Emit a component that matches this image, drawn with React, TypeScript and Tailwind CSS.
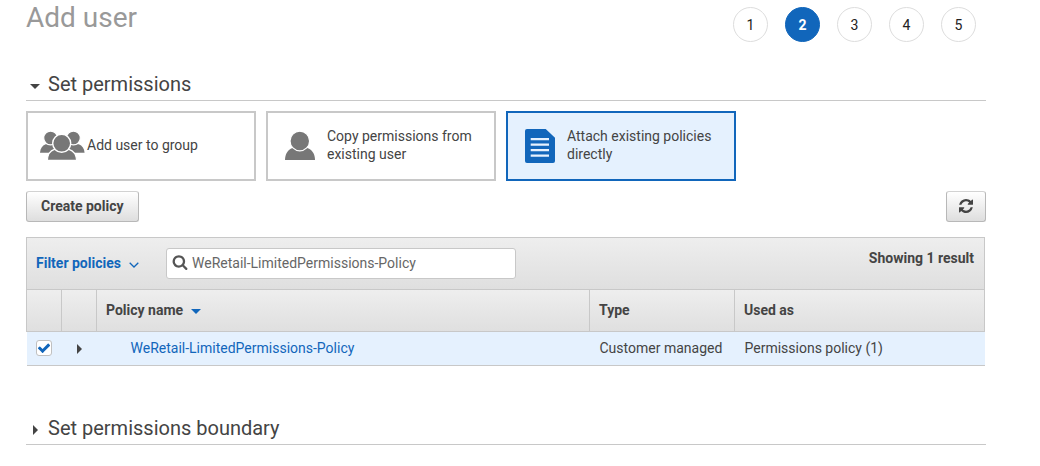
import React, { useState } from 'react';
import clsx from 'clsx';

interface Policy {
  name: string;
  type: string;
  usedAs: string;
}

const steps = [1, 2, 3, 4, 5];

const policies: Policy[] = [
  {
    name: 'WeRetail-LimitedPermissions-Policy',
    type: 'Customer managed',
    usedAs: 'Permissions policy (1)',
  },
];

const GroupIcon = () => (
  <svg viewBox="0 0 49 34" className="h-[34px] w-[49px] shrink-0" fill="#777" aria-hidden="true">
    <path d="M2 23.7C2.3 19.5 4.2 16.6 7.6 15.2H18V23.7Z" />
    <path d="M46.6 23.7C46.3 19.5 44.2 16.6 40.8 15.2H30V23.7Z" />
    <circle cx="12.6" cy="9" r="6.9" stroke="#fff" strokeWidth="1.2" />
    <circle cx="35.4" cy="9" r="6.9" stroke="#fff" strokeWidth="1.2" />
    <path
      d="M9.4 31.3C9.6 25.5 12 21.8 16.4 20.4H31C35.6 21.8 38.2 25.5 38.6 31.3Z"
      stroke="#fff"
      strokeWidth="1.2"
    />
    <circle cx="23.7" cy="14.3" r="9" stroke="#fff" strokeWidth="1.4" />
  </svg>
);

const UserIcon = () => (
  <svg viewBox="0 0 49 34" className="h-[34px] w-[49px] shrink-0" fill="#777" aria-hidden="true">
    <path d="M7 31C7 25 9.8 20.6 14.4 18.9H29.4C34.2 20.6 37 25 37 31Z" />
    <circle cx="21.8" cy="12" r="9.8" stroke="#fff" strokeWidth="1.2" />
  </svg>
);

const DocumentIcon = () => (
  <svg viewBox="0 0 49 34" className="h-[34px] w-[49px] shrink-0" aria-hidden="true">
    <path d="M9 0H27.7L37 8.7V32a2 2 0 0 1-2 2H9a2 2 0 0 1-2-2V2a2 2 0 0 1 2-2Z" fill="#1166bb" />
    <path d="M12.7 10.2H31M12.7 15.6H31M12.7 21.1H31M12.7 26.6H31" stroke="#e5f1fe" strokeWidth="2.3" />
  </svg>
);

const SearchIcon = () => (
  <svg viewBox="0 0 1792 1792" className="mb-1 h-4 w-4" fill="#555" aria-hidden="true">
    <path d="M1216 832q0-185-131.5-316.5t-316.5-131.5-316.5 131.5-131.5 316.5 131.5 316.5 316.5 131.5 316.5-131.5 131.5-316.5zm512 832q0 52-38 90t-90 38q-54 0-90-38l-343-342q-179 124-399 124-143 0-273.5-55.5t-225-150-150-225-55.5-273.5 55.5-273.5 150-225 225-150 273.5-55.5 273.5 55.5 225 150 150 225 55.5 273.5q0 220-124 399l343 343q37 37 37 90z" />
  </svg>
);

const RefreshIcon = () => (
  <svg viewBox="0 0 1536 1536" className="h-[14px] w-[14px]" fill="#444" aria-hidden="true">
    <path d="M1511 928q0 5-1 7-64 268-268 434.5t-478 166.5q-146 0-282.5-55t-243.5-157l-129 129q-19 19-45 19t-45-19-19-45v-448q0-26 19-45t45-19h448q26 0 45 19t19 45-19 45l-137 137q71 66 161 102t187 36q134 0 250-65t186-179q11-17 53-117 8-23 30-23h192q13 0 22.5 9.5t9.5 22.5zm25-800v448q0 26-19 45t-45 19h-448q-26 0-45-19t-19-45 19-45l138-138q-148-137-349-137-134 0-250 65t-186 179q-11 17-53 117-8 23-30 23h-199q-13 0-22.5-9.5t-9.5-22.5v-7q65-268 270-434.5t480-166.5q146 0 284 55.5t245 156.5l130-129q19-19 45-19t45 19 19 45z" />
  </svg>
);

const CaretDown = ({ className }: { className?: string }) => (
  <svg viewBox="0 0 10 5" className={clsx('h-[5px] w-[10px] shrink-0', className)} fill="currentColor" aria-hidden="true">
    <path d="M0 0H10L5 5Z" />
  </svg>
);

const CaretRight = () => (
  <svg viewBox="0 0 5 10" className="h-[10px] w-[5px] shrink-0" fill="currentColor" aria-hidden="true">
    <path d="M0 0V10L5 5Z" />
  </svg>
);

const options = [
  { id: 'group', label: 'Add user to group', icon: <GroupIcon /> },
  { id: 'copy', label: 'Copy permissions from existing user', icon: <UserIcon /> },
  { id: 'attach', label: 'Attach existing policies directly', icon: <DocumentIcon /> },
];

const SectionHeading = ({ title, open }: { title: string; open: boolean }) => (
  <h2 className="border-b border-[#c8c8c8]">
    <button type="button" aria-expanded={open} className="flex h-8 w-full items-center text-left text-xl text-[#444]">
      <span className="flex w-[22px] justify-center pt-1 pr-1">{open ? <CaretDown /> : <CaretRight />}</span>
      {title}
    </button>
  </h2>
);

const buttonStyle =
  'flex h-[31px] items-center justify-center rounded-[3px] border border-[#b8b8b8] border-t-[#d2d2d2] bg-linear-to-b from-white to-[#dedede] pb-[2px] font-bold text-[#444]';

const headCell = 'border border-[#c8c8c8] px-[9px] pb-[2px] text-left font-bold';

const App: React.FC = () => {
  const [selected, setSelected] = useState('attach');
  const [query, setQuery] = useState('WeRetail-LimitedPermissions-Policy');
  const [checked, setChecked] = useState(true);

  return (
    <main className="bg-white pr-[54px] pb-5 pl-[26px] font-[Roboto,sans-serif] text-sm text-[#444]">
      <header className="flex items-start justify-between pr-[10px]">
        <h1 className="text-[28px] leading-9 text-[#999]">Add user</h1>
        <ol className="flex gap-[17px] pt-[7px]">
          {steps.map((step) => (
            <li
              key={step}
              className={clsx(
                'flex h-[35px] w-[35px] items-center justify-center rounded-full border',
                step === 2 ? 'border-[#1166bb] bg-[#1166bb] font-bold text-white' : 'border-[#ddd] text-[#222]'
              )}
            >
              {step}
            </li>
          ))}
        </ol>
      </header>

      <section className="mt-[26px]">
        <SectionHeading title="Set permissions" open />

        <div className="mt-[10px] flex gap-[10px]">
          {options.map((option) => (
            <button
              key={option.id}
              type="button"
              aria-pressed={selected === option.id}
              onClick={() => setSelected(option.id)}
              className={clsx(
                'flex h-[70px] w-[230px] items-center border-2 pr-3 pl-[10px] text-left leading-[18px]',
                selected === option.id ? 'border-[#1166bb] bg-[#e5f1fe]' : 'border-[#c8c8c8] bg-white'
              )}
            >
              {option.icon}
              <span className="pb-[2px]">{option.label}</span>
            </button>
          ))}
        </div>

        <div className="mt-[10px] flex justify-between">
          <button type="button" className={clsx(buttonStyle, 'px-[14px]')}>
            Create policy
          </button>
          <button type="button" aria-label="Refresh" className={clsx(buttonStyle, 'w-10')}>
            <RefreshIcon />
          </button>
        </div>

        <div className="mt-[15px] mr-px">
          <div className="flex h-[53px] items-center border border-[#c8c8c8] bg-linear-to-b from-[#eee] to-[#dfdfdf] pr-[10px] pl-[9px]">
            <button type="button" className="flex w-[130px] items-center gap-2 pb-[2px] font-bold text-[#1166bb]">
              Filter policies
              <svg viewBox="0 0 10 6" className="mt-1 h-[6px] w-[10px]" fill="none" stroke="currentColor" strokeWidth="1.3" aria-hidden="true">
                <path d="M0.7 0.7L5 5L9.3 0.7" />
              </svg>
            </button>
            <div className="flex h-[31px] w-[350px] items-center gap-1 rounded-[3px] border border-[#c8c8c8] bg-white px-[5px]">
              <SearchIcon />
              <input
                type="text"
                aria-label="Search"
                value={query}
                onChange={(e) => setQuery(e.target.value)}
                className="min-w-0 flex-1 pb-[2px] text-[#666] outline-none"
              />
            </div>
            <p className="mb-3 ml-auto font-bold">Showing 1 result</p>
          </div>

          <table className="-mt-px w-full table-fixed border-collapse">
            <colgroup>
              <col className="w-[35px]" />
              <col className="w-[35px]" />
              <col />
              <col className="w-[145px]" />
              <col className="w-[250px]" />
            </colgroup>
            <thead>
              <tr className="h-[42px] bg-linear-to-b from-[#eee] to-[#dfdfdf]">
                <th className={headCell} />
                <th className={headCell} />
                <th className={headCell}>
                  <span className="flex items-center gap-2">
                    Policy name
                    <CaretDown className="mt-1 text-[#1166bb]" />
                  </span>
                </th>
                <th className={headCell}>Type</th>
                <th className={headCell}>Used as</th>
              </tr>
            </thead>
            <tbody>
              {policies.map((policy) => (
                <tr key={policy.name} className="h-[34px] border-b border-[#c8c8c8] bg-[#e5f1fe]">
                  <td className="pb-[2px] pl-[9px]">
                    <span className="relative block h-4 w-4">
                      <input
                        type="checkbox"
                        aria-label={policy.name}
                        checked={checked}
                        onChange={() => setChecked(!checked)}
                        className="block h-4 w-4 appearance-none rounded-[3px] border border-[#c0c0c0] bg-white"
                      />
                      {checked && (
                        <svg viewBox="0 0 1792 1792" className="pointer-events-none absolute inset-[1px] h-[14px] w-[14px]" fill="#1166bb" aria-hidden="true">
                          <path d="M1671 566q0 40-28 68l-724 724-136 136q-28 28-68 28t-68-28l-136-136-362-362q-28-28-28-68t28-68l136-136q28-28 68-28t68 28l294 295 656-657q28-28 68-28t68 28l136 136q28 28 28 68z" />
                        </svg>
                      )}
                    </span>
                  </td>
                  <td>
                    <button type="button" aria-label="Expand" className="flex w-full justify-center">
                      <CaretRight />
                    </button>
                  </td>
                  <td className="pb-[2px] pl-[34px]">
                    <a href="#policy" className="text-[#1166bb]">
                      {policy.name}
                    </a>
                  </td>
                  <td className="pb-[2px] pl-[10px]">{policy.type}</td>
                  <td className="pb-[2px] pl-[10px]">{policy.usedAs}</td>
                </tr>
              ))}
            </tbody>
          </table>
        </div>
      </section>

      <section className="mt-[46px]">
        <SectionHeading title="Set permissions boundary" open={false} />
      </section>
    </main>
  );
};

export default App;
